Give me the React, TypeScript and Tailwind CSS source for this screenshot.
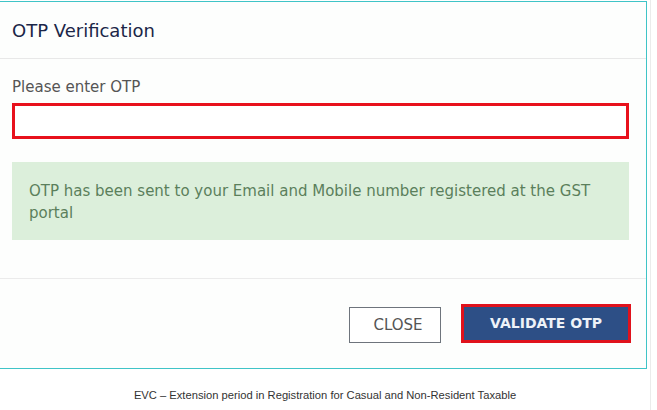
export default function App() {
  return (
    <div className="flex h-[410px] w-[657px] bg-white" style={{ fontFamily: '"DejaVu Sans", Verdana, sans-serif' }}>
      <div className="w-[651px] border-r border-[#ebebeb]">
        <div className="mt-px w-[647px] border-t border-r border-b border-[#3fc4c7] bg-[#fdfefd]">
          <div className="flex h-[57px] items-center border-b border-[#e8e8e8] px-3">
            <h2 className="text-[18px] text-[#1b2648]">OTP Verification</h2>
          </div>

          <div className="pt-[18px] pb-[38px] pl-3 pr-[17px]">
            <label className="block text-[15px] leading-5 text-[#555]">Please enter OTP</label>
            <div className="mt-[6px] h-9 border-[3px] border-[#e8111c] bg-white" />
            <div className="mt-[23px] h-[78px] bg-[#dcefdb] px-[17px] py-[18px] text-[15px] leading-[22px] text-[#5b7f5b]">
              OTP has been sent to your Email and Mobile number registered at the GST portal
            </div>
          </div>

          <div className="flex items-end justify-end gap-5 border-t border-[#ebebeb] pt-[25px] pr-[15px] pb-[25px]">
            <button className="h-9 w-[92px] border-[1.5px] border-[#6e747c] bg-white pl-[6px] text-[15px] text-[#555]">
              CLOSE
            </button>
            <button className="h-[39px] w-[170px] border-[3px] border-[#e0121c] bg-[#2d4f86] text-[14px] font-semibold text-[#eef2f8]">
              VALIDATE OTP
            </button>
          </div>
        </div>

        <p className="mt-[18px] text-center text-[11.2px] text-[#333]" style={{ fontFamily: '"Liberation Sans", Arial, sans-serif' }}>
          EVC – Extension period in Registration for Casual and Non-Resident Taxable
        </p>
      </div>
    </div>
  );
}
